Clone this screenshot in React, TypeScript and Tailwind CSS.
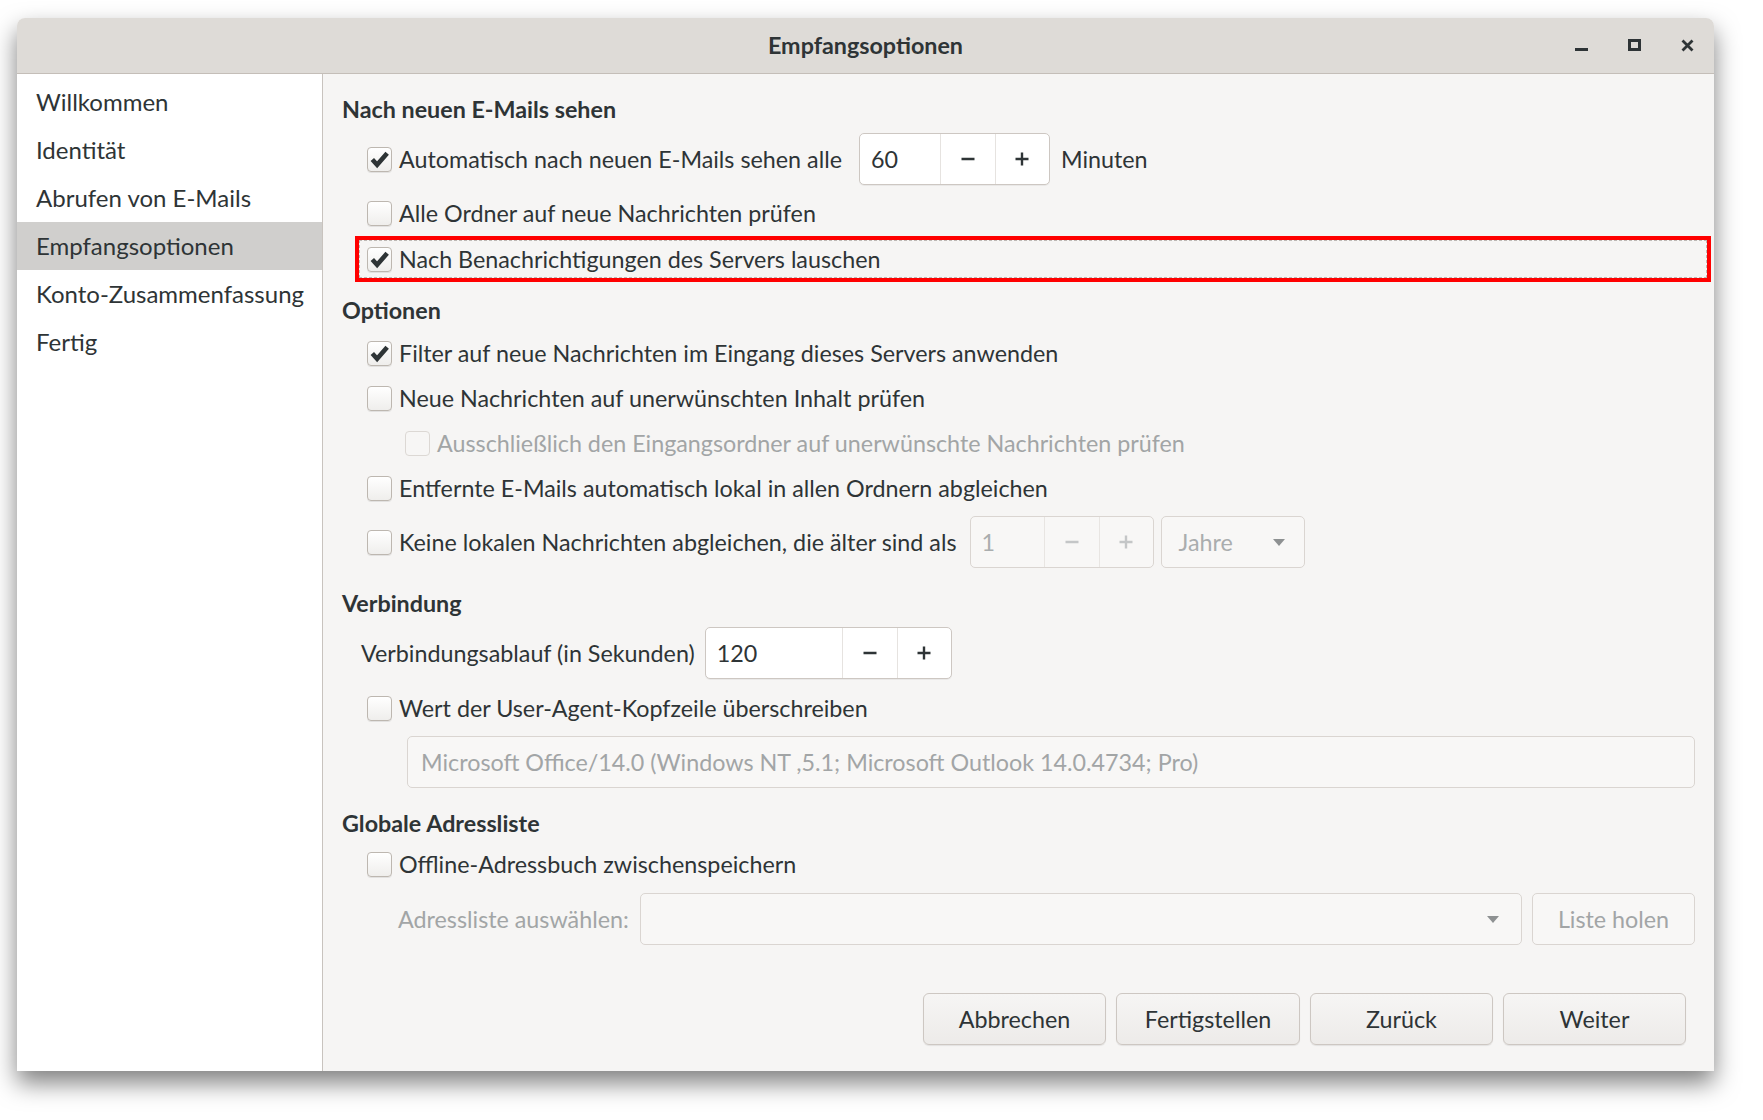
import React from 'react';

const FONT = "font-['Lato','Noto_Sans',sans-serif]";

const SIDEBAR = [
  'Willkommen',
  'Identität',
  'Abrufen von E-Mails',
  'Empfangsoptionen',
  'Konto-Zusammenfassung',
  'Fertig',
];

function Check({ checked = false, disabled = false }: { checked?: boolean; disabled?: boolean }) {
  return (
    <span
      className={`flex h-[25px] w-[25px] shrink-0 items-center justify-center rounded-[4px] border ${
        disabled
          ? 'border-[#dcd8d4] bg-[#f7f6f5]'
          : 'border-[#bdb7b0] bg-gradient-to-b from-white to-[#efeeec] shadow-[0_1px_0_rgba(0,0,0,0.08)]'
      }`}
    >
      {checked && (
        <svg viewBox="0 0 24 24" className="h-[23px] w-[23px]">
          <path d="M4.5 12 L9.5 17.5 L20 5.5" fill="none" stroke="#2e3436" strokeWidth="4.8" strokeLinejoin="miter" />
        </svg>
      )}
    </span>
  );
}

function Spin({
  value,
  entryW,
  disabled = false,
}: {
  value: string;
  entryW: string;
  disabled?: boolean;
}) {
  const border = disabled ? 'border-[#dad5d1]' : 'border-[#cdc7c2]';
  const text = disabled ? 'text-[#aaadae]' : 'text-[#2e3436]';
  const sign = disabled ? 'text-[#c4c6c7]' : 'text-[#2e3436]';
  return (
    <div
      className={`flex h-[52px] shrink-0 overflow-hidden rounded-[5px] border ${border} ${
        disabled ? 'bg-[#f8f7f6]' : 'bg-white shadow-[0_1px_0_rgba(0,0,0,0.05)]'
      }`}
    >
      <div className={`flex items-center pl-[11px] ${entryW} ${text}`}>{value}</div>
      <div className={`flex w-[55px] items-center justify-center border-l ${disabled ? 'border-[#e8e5e2]' : 'border-[#e6e3e0]'} ${sign}`}>
        <svg viewBox="0 0 16 16" className="h-[16px] w-[16px]">
          <path d="M1.5 8 H14.5" stroke="currentColor" strokeWidth="2.4" />
        </svg>
      </div>
      <div className={`flex w-[54px] items-center justify-center border-l ${disabled ? 'border-[#e8e5e2]' : 'border-[#e6e3e0]'} ${sign}`}>
        <svg viewBox="0 0 16 16" className="h-[16px] w-[16px]">
          <path d="M1.5 8 H14.5 M8 1.5 V14.5" stroke="currentColor" strokeWidth="2.4" />
        </svg>
      </div>
    </div>
  );
}

function Arrow({ color }: { color: string }) {
  return (
    <svg viewBox="0 0 12 7" className="h-[7px] w-[12px]">
      <path d="M0 0 H12 L6 7 Z" fill={color} />
    </svg>
  );
}

function CheckRow({
  label,
  checked = false,
  disabled = false,
  indent = 'pl-[25px]',
}: {
  label: string;
  checked?: boolean;
  disabled?: boolean;
  indent?: string;
}) {
  return (
    <div className={`flex h-[45px] items-center ${indent}`}>
      <Check checked={checked} disabled={disabled} />
      <span className={`ml-[7px] ${disabled ? 'text-[#a2a5a6]' : ''}`}>{label}</span>
    </div>
  );
}

function Heading({ children, className = '' }: { children: React.ReactNode; className?: string }) {
  return <div className={`flex h-[30px] items-center font-bold ${className}`}>{children}</div>;
}

function Button({ label, className = '' }: { label: string; className?: string }) {
  return (
    <div
      className={`flex h-[52px] items-center justify-center rounded-[6px] border border-[#cdc7c2] bg-gradient-to-b from-[#f6f5f4] to-[#edebe9] shadow-[0_1px_1px_rgba(0,0,0,0.08)] ${className}`}
    >
      {label}
    </div>
  );
}

export default function App() {
  return (
    <div className={`h-[1120px] w-[1763px] bg-white pl-[17px] pt-[18px] text-[23.3px] text-[#2e3436] ${FONT}`}>
      <div className="flex h-[1053px] w-[1697px] flex-col overflow-hidden rounded-t-[8px] shadow-[0_12px_24px_rgba(0,0,0,0.5)]">
        {/* title bar */}
        <div className="relative flex h-[56px] shrink-0 items-center justify-center border-b border-[#c4beb8] bg-[#dedbd7]">
          <span className="font-bold">Empfangsoptionen</span>
          <div className="absolute right-[20px] top-0 flex h-full items-center gap-[40px]">
            <svg viewBox="0 0 13 13" className="h-[13px] w-[13px]">
              <rect x="0" y="9" width="13" height="3" fill="#2e3436" />
            </svg>
            <svg viewBox="0 0 13 13" className="h-[13px] w-[13px]">
              <rect x="1.5" y="1.5" width="10" height="9" fill="none" stroke="#2e3436" strokeWidth="3" />
            </svg>
            <svg viewBox="0 0 13 13" className="h-[13px] w-[13px]">
              <path d="M1.5 1.5 L11.5 11.5 M11.5 1.5 L1.5 11.5" stroke="#2e3436" strokeWidth="2.8" />
            </svg>
          </div>
        </div>

        <div className="flex min-h-0 flex-1">
          {/* sidebar */}
          <div className="w-[306px] shrink-0 border-r border-[#c8c3be] bg-white pt-[4px] text-[24px]">
            {SIDEBAR.map((item) => (
              <div
                key={item}
                className={`flex h-[48px] items-center pl-[19px] ${item === 'Empfangsoptionen' ? 'bg-[#d0cfcd]' : ''}`}
              >
                {item}
              </div>
            ))}
          </div>

          {/* main */}
          <div className="flex flex-1 flex-col bg-[#f6f5f4] pl-[19px] pr-[19px] pt-[20px]">
            <Heading>Nach neuen E-Mails sehen</Heading>

            <div className="mt-[9px] flex h-[52px] items-center pl-[25px]">
              <Check checked />
              <span className="ml-[7px] mr-[17px]">Automatisch nach neuen E-Mails sehen alle</span>
              <Spin value="60" entryW="w-[80px]" />
              <span className="ml-[11px]">Minuten</span>
            </div>

            <div className="mt-[6px]">
              <CheckRow label="Alle Ordner auf neue Nachrichten prüfen" />
            </div>

            <div className="-mr-[16px] ml-[13px] h-[46px] border-4 border-[#ff0000]">
              <div className="flex h-full items-center border border-dashed border-[#bdb9b5] pl-[7px]">
                <Check checked />
                <span className="ml-[7px]">Nach Benachrichtigungen des Servers lauschen</span>
              </div>
            </div>

            <Heading className="mt-[13px]">Optionen</Heading>
            <div className="mt-[6px]">
              <CheckRow label="Filter auf neue Nachrichten im Eingang dieses Servers anwenden" checked />
              <CheckRow label="Neue Nachrichten auf unerwünschten Inhalt prüfen" />
              <CheckRow label="Ausschließlich den Eingangsordner auf unerwünschte Nachrichten prüfen" disabled indent="pl-[63px]" />
              <CheckRow label="Entfernte E-Mails automatisch lokal in allen Ordnern abgleichen" />
            </div>

            <div className="mt-[5px] flex h-[52px] items-center pl-[25px]">
              <Check />
              <span className="ml-[7px] mr-[13px]">Keine lokalen Nachrichten abgleichen, die älter sind als</span>
              <Spin value="1" entryW="w-[73px]" disabled />
              <div className="ml-[7px] flex h-[52px] w-[144px] items-center justify-between rounded-[5px] border border-[#dad5d1] bg-[#f8f7f6] pl-[17px] pr-[19px] text-[#aaadae]">
                <span>Jahre</span>
                <Arrow color="#8e9192" />
              </div>
            </div>

            <Heading className="mt-[20px]">Verbindung</Heading>
            <div className="mt-[9px] flex h-[52px] items-center pl-[19px]">
              <span className="mr-[10px]">Verbindungsablauf (in Sekunden)</span>
              <Spin value="120" entryW="w-[136px]" />
            </div>

            <div className="mt-[7px]">
              <CheckRow label="Wert der User-Agent-Kopfzeile überschreiben" />
            </div>
            <div className="ml-[65px] mt-[5px] flex h-[52px] items-center rounded-[5px] border border-[#dad5d1] bg-[#f8f7f6] pl-[13px] text-[#a2a5a6]">
              Microsoft Office/14.0 (Windows NT ,5.1; Microsoft Outlook 14.0.4734; Pro)
            </div>

            <Heading className="mt-[20px]">Globale Adressliste</Heading>
            <div className="mt-[4px]">
              <CheckRow label="Offline-Adressbuch zwischenspeichern" />
            </div>
            <div className="mt-[6px] flex h-[52px] items-center pl-[56px]">
              <span className="mr-[11px] text-[#a2a5a6]">Adressliste auswählen:</span>
              <div className="flex h-[52px] flex-1 items-center justify-end rounded-[5px] border border-[#dad5d1] bg-[#f8f7f6] pr-[22px]">
                <Arrow color="#8e9192" />
              </div>
              <div className="ml-[10px] flex h-[52px] w-[163px] items-center justify-center rounded-[5px] border border-[#dad5d1] bg-[#f8f7f6] text-[#a2a5a6]">
                Liste holen
              </div>
            </div>

            <div className="mt-[48px] flex justify-end gap-[10px] pr-[9px]">
              <Button label="Abbrechen" className="w-[183px]" />
              <Button label="Fertigstellen" className="w-[184px]" />
              <Button label="Zurück" className="w-[183px]" />
              <Button label="Weiter" className="w-[183px]" />
            </div>
          </div>
        </div>
      </div>
    </div>
  );
}
